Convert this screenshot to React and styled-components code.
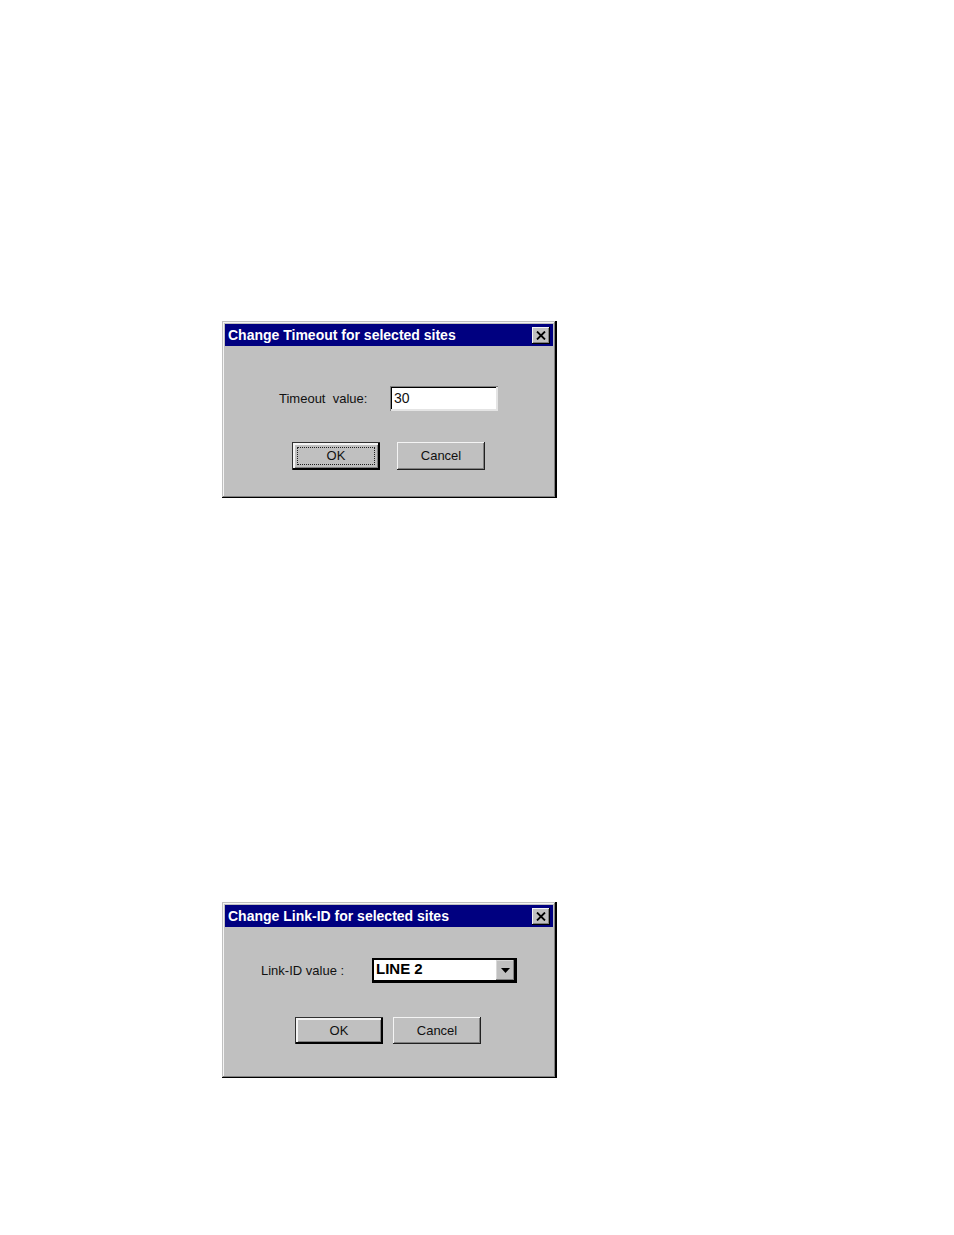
import { useState } from "react";
import styled, { createGlobalStyle } from "styled-components";

const COLORS = {
  face: "#c0c0c0",
  light: "#f4f4f4",
  shadow: "#808080",
  dark: "#000000",
  title: "#000080",
};

const GlobalStyle = createGlobalStyle`
  * {
    box-sizing: border-box;
  }
  body {
    margin: 0;
    background: #ffffff;
    font-family: "Liberation Sans", Arial, sans-serif;
    font-size: 13px;
    line-height: 16px;
    color: #111111;
  }
`;

const Page = styled.main`
  display: flex;
  flex-direction: column;
  align-items: flex-start;
  gap: 404px;
  padding: 321px 24px 157px 222px;
`;

const Window = styled.section`
  width: 100%;
  max-width: 335px;
  padding: 3px 4px 3px 3px;
  background: ${COLORS.face};
  box-shadow: inset -2px -1px 0 ${COLORS.dark}, inset 1px 1px 0 ${COLORS.face},
    inset -3px -2px 0 ${COLORS.shadow}, inset 2px 2px 0 ${COLORS.light};
`;

const TitleBar = styled.header`
  display: flex;
  align-items: center;
  justify-content: space-between;
  height: 22px;
  padding: 0 3px;
  background: ${COLORS.title};
`;

const Title = styled.h2`
  margin: 0;
  font-size: 14px;
  font-weight: bold;
  color: #ffffff;
  white-space: nowrap;
`;

const CloseButton = styled.button`
  display: flex;
  align-items: center;
  justify-content: center;
  width: 18px;
  height: 17px;
  padding: 0;
  border: 0;
  background: ${COLORS.face};
  box-shadow: inset -1px -1px 0 ${COLORS.dark}, inset 1px 1px 0 ${COLORS.light},
    inset -2px -2px 0 ${COLORS.shadow};
`;

const Body = styled.form`
  display: flex;
  flex-direction: column;
  gap: ${(props) => props.$gap}px;
  padding: ${(props) => props.$top}px 0 ${(props) => props.$bottom}px;
`;

const Field = styled.div`
  display: grid;
  grid-template-columns: 111px auto;
  justify-content: start;
  align-items: center;
  padding-left: ${(props) => props.$indent}px;
`;

const Label = styled.label`
  white-space: pre;
`;

const TextBox = styled.input`
  width: 108px;
  height: 25px;
  padding: 0 4px 2px;
  border: 0;
  outline: 0;
  border-radius: 0;
  background: #ffffff;
  font: inherit;
  font-size: 14px;
  color: inherit;
  box-shadow: inset 1px 1px 0 ${COLORS.shadow}, inset -2px -2px 0 #e4e4e4,
    inset 2px 2px 0 ${COLORS.dark};
`;

const Combo = styled.div`
  position: relative;
  width: 145px;
  height: 25px;
  border: solid ${COLORS.dark};
  border-width: 2px 3px 3px 2px;
  background: #ffffff;
`;

const Select = styled.select`
  display: block;
  appearance: none;
  width: 100%;
  height: 100%;
  padding: 0 20px 4px 2px;
  border: 0;
  outline: 0;
  background: transparent;
  font: bold 15px "Liberation Sans", Arial, sans-serif;
  color: #000000;
`;

const Arrow = styled.span`
  position: absolute;
  top: 0;
  right: 0;
  bottom: 0;
  display: flex;
  align-items: center;
  justify-content: center;
  width: 18px;
  background: ${COLORS.face};
  pointer-events: none;
  box-shadow: inset -1px -1px 0 ${COLORS.shadow}, inset 1px 1px 0 #d8d8d8;
`;

const Buttons = styled.div`
  display: flex;
  gap: ${(props) => props.$gap}px;
  padding-left: ${(props) => props.$indent}px;
`;

const raised = `inset -1px -1px 0 #202020, inset 1px 1px 0 ${COLORS.light},
  inset -2px -2px 0 ${COLORS.shadow}`;
const raisedDefault = `inset 1px 1px 0 #303030, inset -2px -2px 0 ${COLORS.dark},
  inset 3px 3px 0 ${COLORS.light}, inset -3px -3px 0 ${COLORS.shadow}`;

const PushButton = styled.button`
  width: 88px;
  height: ${(props) => props.$height}px;
  padding: ${(props) => (props.$focused ? "5px" : "0")};
  border: 0;
  background: ${COLORS.face};
  font: inherit;
  color: inherit;
  box-shadow: ${(props) => (props.$primary ? raisedDefault : raised)};
`;

const FocusRect = styled.span`
  display: flex;
  align-items: center;
  justify-content: center;
  height: 100%;
  border: 1px dotted #202020;
`;

const Dialog = ({ title, children }) => {
  return (
    <Window role="dialog" aria-label={title}>
      <TitleBar>
        <Title>{title}</Title>
        <CloseButton type="button" aria-label="Close">
          <svg width="10" height="9" viewBox="0 0 10 9">
            <path
              d="M1 0.5L9 8.5M9 0.5L1 8.5"
              stroke="#000000"
              strokeWidth="1.8"
              fill="none"
            />
          </svg>
        </CloseButton>
      </TitleBar>
      {children}
    </Window>
  );
};

const App = () => {
  const [timeout, setTimeoutValue] = useState("30");
  const [link, setLink] = useState("LINE 2");
  return (
    <>
      <GlobalStyle />
      <Page>
        <Dialog title="Change Timeout for selected sites">
          <Body $top={40} $gap={31} $bottom={25}>
            <Field $indent={54}>
              <Label htmlFor="timeout">{"Timeout  value:"}</Label>
              <TextBox
                id="timeout"
                type="text"
                value={timeout}
                onChange={(e) => setTimeoutValue(e.target.value)}
              />
            </Field>
            <Buttons $indent={67} $gap={17}>
              <PushButton type="button" $height={28} $primary $focused>
                <FocusRect>OK</FocusRect>
              </PushButton>
              <PushButton type="button" $height={28}>
                Cancel
              </PushButton>
            </Buttons>
          </Body>
        </Dialog>
        <Dialog title="Change Link-ID for selected sites">
          <Body $top={31} $gap={34} $bottom={31}>
            <Field $indent={36}>
              <Label htmlFor="link">Link-ID value :</Label>
              <Combo>
                <Select
                  id="link"
                  value={link}
                  onChange={(e) => setLink(e.target.value)}
                >
                  <option>LINE 2</option>
                </Select>
                <Arrow>
                  <svg width="9" height="5" viewBox="0 0 9 5">
                    <path d="M0 0H9L4.5 5Z" fill="#000000" />
                  </svg>
                </Arrow>
              </Combo>
            </Field>
            <Buttons $indent={70} $gap={10}>
              <PushButton type="button" $height={27} $primary>
                OK
              </PushButton>
              <PushButton type="button" $height={27}>
                Cancel
              </PushButton>
            </Buttons>
          </Body>
        </Dialog>
      </Page>
    </>
  );
};

export default App;
